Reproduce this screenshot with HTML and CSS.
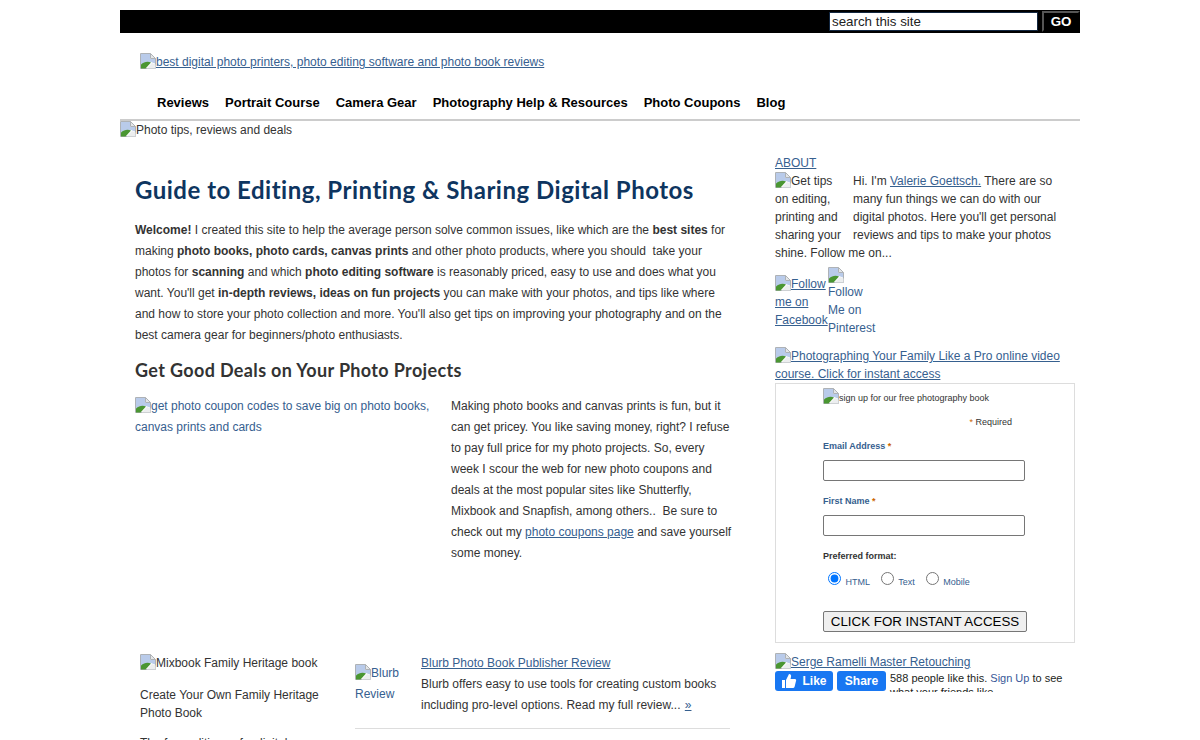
FILE: index.html
```html
<!DOCTYPE html>
<html lang="en">
<head>
  <meta charset="UTF-8">
  <meta name="viewport" content="width=device-width, initial-scale=1">
  <title>Guide to Editing, Printing &amp; Sharing Digital Photos</title>
  <link rel="stylesheet" href="styles.css">
</head>
<body>
  <svg class="sprite" width="0" height="0" aria-hidden="true">
    <symbol id="broken" viewBox="0 0 16 16">
      <path d="M.5.5H10.500L15.500 5.500V15.500H.5Z" fill="#fff" stroke="#aeb2b6"/>
      <path d="M1 1H10V6H15V10.500L11 9L1 11.500Z" fill="#b9cbea"/>
      <path d="M10.500.5V5.500H15.500Z" fill="#e4e6e8" stroke="#aeb2b6"/>
      <path d="M1 15.500V11.500C4 8.500 8 8 11 9.500L5.500 15.500Z" fill="#4a9632"/>
      <path d="M6.500 15.500L12 10L15.500 11.500V15.500Z" fill="#eceeef"/>
    </symbol>
  </svg>

  <div class="page">
    <div class="search-bar">
      <input class="search-input" type="text" value="search this site">
      <button class="search-go" type="button">GO</button>
    </div>

    <div class="logo">
      <a href="#"><svg class="broken"><use href="#broken"/></svg>best digital photo printers, photo editing software and photo book reviews</a>
    </div>

    <ul class="nav">
      <li>Reviews</li>
      <li>Portrait Course</li>
      <li>Camera Gear</li>
      <li>Photography Help &amp; Resources</li>
      <li>Photo Coupons</li>
      <li>Blog</li>
    </ul>

    <div class="banner"><svg class="broken"><use href="#broken"/></svg>Photo tips, reviews and deals</div>

    <div class="columns">
      <div class="main">
        <h1>Guide to Editing, Printing &amp; Sharing Digital Photos</h1>
        <p class="intro"><b>Welcome!</b> I created this site to help the average person solve common issues, like which are the <b>best sites</b> for making <b>photo books, photo cards, canvas prints</b> and other photo products, where you should&nbsp; take your photos for <b>scanning</b> and which <b>photo editing software</b> is reasonably priced, easy to use and does what you want. You'll get <b>in-depth reviews, ideas on fun projects</b> you can make with your photos, and tips like where and how to store your photo collection and more. You'll also get tips on improving your photography and on the best camera gear for beginners/photo enthusiasts.</p>

        <h2>Get Good Deals on Your Photo Projects</h2>
        <div class="deals">
          <a class="deals-img" href="#"><svg class="broken"><use href="#broken"/></svg>get photo coupon codes to save big on photo books, canvas prints and cards</a>
          <p>Making photo books and canvas prints is fun, but it can get pricey. You like saving money, right? I refuse to pay full price for my photo projects. So, every week I scour the web for new photo coupons and deals at the most popular sites like Shutterfly, Mixbook and Snapfish, among others..&nbsp; Be sure to check out my <a href="#">photo coupons page</a> and save yourself some money.</p>
        </div>

        <div class="lower">
          <div class="heritage">
            <div class="heritage-img"><svg class="broken"><use href="#broken"/></svg>Mixbook Family Heritage book</div>
            <p>Create Your Own Family Heritage Photo Book</p>
            <p class="heritage-next">The four editions of a digital</p>
          </div>
          <div class="review">
            <a class="review-img" href="#"><svg class="broken"><use href="#broken"/></svg>Blurb Review</a>
            <div class="review-text">
              <a href="#">Blurb Photo Book Publisher Review</a>
              <p>Blurb offers easy to use tools for creating custom books including pro-level options. Read my full review... <a class="more" href="#">»</a></p>
            </div>
          </div>
        </div>
      </div>

      <div class="side">
        <a href="#">ABOUT</a>
        <div class="about">
          <div class="about-img"><svg class="broken"><use href="#broken"/></svg>Get tips on editing, printing and sharing your</div>
          Hi. I'm <a href="#">Valerie Goettsch.</a> There are so many fun things we can do with our digital photos. Here you'll get personal reviews and tips to make your photos shine. Follow me on...
        </div>

        <div class="follow">
          <a class="follow-fb" href="#"><svg class="broken"><use href="#broken"/></svg>Follow me on Facebook</a>
          <span class="follow-pin"><svg class="broken block"><use href="#broken"/></svg>Follow Me on Pinterest</span>
        </div>

        <a class="course" href="#"><svg class="broken"><use href="#broken"/></svg>Photographing Your Family Like a Pro online video course. Click for instant access</a>

        <form class="signup">
          <div class="signup-img"><svg class="broken"><use href="#broken"/></svg>sign up for our free photography book</div>
          <div class="required"><span class="star">*</span> Required</div>
          <label class="field-label" for="email">Email Address <span class="star">*</span></label>
          <input class="field" id="email" type="text">
          <label class="field-label" for="fname">First Name <span class="star">*</span></label>
          <input class="field" id="fname" type="text">
          <div class="format-label">Preferred format:</div>
          <div class="formats">
            <label><input type="radio" name="fmt" checked> HTML</label>
            <label><input type="radio" name="fmt"> Text</label>
            <label><input type="radio" name="fmt"> Mobile</label>
          </div>
          <button class="submit" type="button">CLICK FOR INSTANT ACCESS</button>
        </form>

        <a class="serge" href="#"><svg class="broken"><use href="#broken"/></svg>Serge Ramelli Master Retouching</a>

        <div class="fb">
          <span class="fb-btn fb-like">
            <svg width="16" height="16" viewBox="0 0 16 16"><path fill="#fff" d="M1 7H4V15H1ZM5 7L8 1C9.500 1 10.500 2 10 4L9.500 6H14C15 6 15.500 7 15 8L13.500 14C13.300 14.700 12.800 15 12 15H5Z"/></svg>
            Like
          </span>
          <span class="fb-btn fb-share">Share</span>
          <div class="fb-text">588 people like this. <a href="#">Sign Up</a> to see what your friends like.</div>
        </div>
      </div>
    </div>
  </div>
</body>
</html>
```

FILE: styles.css
```css
/* base */
* {
  box-sizing: border-box;
}

html, body {
  height: 740px;
  overflow: hidden;
}

body {
  margin: 0;
  background-color: white;
  color: #333;
  font-family: "Liberation Sans", Arial, sans-serif;
  font-size: 12px;
  line-height: 18px;
}

a {
  color: #36608f;
  text-decoration: underline;
}

p {
  margin: 0;
}

.sprite {
  position: absolute;
}

.broken {
  width: 16px;
  height: 16px;
  vertical-align: -3px;
}

.broken.block {
  display: block;
}

.page {
  width: 960px;
  margin: 10px auto 0;
}

/* top bar */
.search-bar {
  display: flex;
  justify-content: flex-end;
  align-items: center;
  height: 23px;
  background-color: black;
}

.search-input {
  width: 209px;
  height: 19px;
  padding: 0 2px;
  border: 1px solid #12263f;
  font-family: "Liberation Sans", Arial, sans-serif;
  font-size: 13.33px;
  color: #222;
}

.search-go {
  width: 38px;
  height: 21px;
  margin-left: 4px;
  padding: 0;
  border: 2px solid;
  border-color: #555 #000 #000 #555;
  background-color: black;
  color: white;
  font-family: "Liberation Sans", Arial, sans-serif;
  font-size: 13.33px;
  font-weight: bold;
}

.logo {
  padding: 20px 0 0 20px;
  height: 60px;
}

.nav {
  display: flex;
  gap: 16px;
  height: 28px;
  margin: 0;
  padding: 1px 0 0 37px;
  list-style: none;
  border-bottom: 2px solid #ccc;
  color: black;
  font-size: 13px;
  font-weight: bold;
  line-height: 18px;
}

.banner {
  height: 28px;
  line-height: 16px;
}

/* columns */
.columns {
  display: flex;
}

.main {
  width: 655px;
  padding: 0 40px 0 15px;
}

.side {
  width: 305px;
  padding-top: 5px;
}

h1 {
  margin: 25px 0 0;
  color: #0e3560;
  font-family: Lato, sans-serif;
  font-size: 24px;
  font-weight: bold;
  line-height: 32px;
  letter-spacing: 0.5px;
}

.intro {
  width: 595px;
  margin-top: 14px;
  line-height: 21px;
}

h2 {
  margin: 12px 0 0;
  font-family: Lato, sans-serif;
  font-size: 18px;
  font-weight: bold;
  line-height: 24px;
  letter-spacing: 0.35px;
}

.deals {
  display: flex;
  margin-top: 14px;
  line-height: 21px;
}

.deals-img {
  flex: none;
  width: 316px;
  padding-right: 16px;
  text-decoration: none;
}

.deals p {
  flex: none;
  width: 284px;
}

.lower {
  display: flex;
  width: 595px;
  margin-top: 89px;
}

.heritage {
  flex: none;
  width: 220px;
  padding: 1px 20px 0 5px;
}

.heritage p {
  margin-top: 13px;
}

.heritage p.heritage-next {
  margin-top: 12px;
}

.heritage-img {
  height: 19px;
}

.review {
  display: flex;
  flex: 1;
  height: 76px;
  border-bottom: 1px solid #ddd;
  line-height: 21px;
}

.review-img {
  flex: none;
  width: 66px;
  padding-top: 10px;
  line-height: 21px;
  text-decoration: none;
}

.review-text {
  flex: 1;
}

.more {
  margin-left: 1px;
}

/* sidebar */
.about {
  width: 285px;
}

.about-img {
  float: left;
  width: 72px;
  margin-right: 6px;
}

.follow {
  display: flex;
  align-items: flex-start;
  margin-top: 5px;
}

.follow-fb {
  width: 53px;
  margin-top: 8px;
}

.follow-pin {
  width: 48px;
  color: #36608f;
}

.course {
  display: block;
  width: 290px;
  margin-top: 10px;
}

.signup {
  width: 300px;
  height: 260px;
  padding: 4px 0 0 47px;
  border: 1px solid #ddd;
  font-size: 9px;
}

.signup-img {
  height: 16px;
}

.required {
  margin-top: 9px;
  padding-right: 62px;
  text-align: right;
}

.star {
  color: #c60;
}

.field-label {
  display: block;
  margin-top: 6px;
  color: #36608f;
  font-weight: bold;
}

.field {
  display: block;
  width: 202px;
  height: 21px;
  margin: 5px 0 11px;
  border: 1px solid #767676;
  border-radius: 2px;
}

.format-label {
  margin-top: 11px;
  font-weight: bold;
}

.formats {
  display: flex;
  gap: 11px;
  margin-top: 7px;
  padding-left: 5px;
  color: #36608f;
}

.formats input {
  margin: 0 2px 0 0;
}

.submit {
  display: block;
  width: 204px;
  height: 21px;
  margin-top: 20px;
  padding: 0;
  border: 1px solid #767676;
  border-radius: 2px;
  background-color: #efefef;
  color: black;
  font-family: "Liberation Sans", Arial, sans-serif;
  font-size: 13.33px;
}

.serge {
  display: block;
  margin-top: 10px;
}

.fb {
  display: flex;
  gap: 4px;
  height: 21px;
  overflow: hidden;
}

.fb-btn {
  display: flex;
  align-items: center;
  justify-content: center;
  flex: none;
  height: 20px;
  border-radius: 3px;
  background-color: #1877f2;
  color: white;
  font-weight: bold;
}

.fb-like {
  gap: 5px;
  width: 58px;
}

.fb-share {
  width: 49px;
}

.fb-text {
  width: 190px;
  color: #1c1e21;
  font-size: 11px;
  line-height: 14px;
}

.fb-text a {
  color: #385898;
  text-decoration: none;
}
```
